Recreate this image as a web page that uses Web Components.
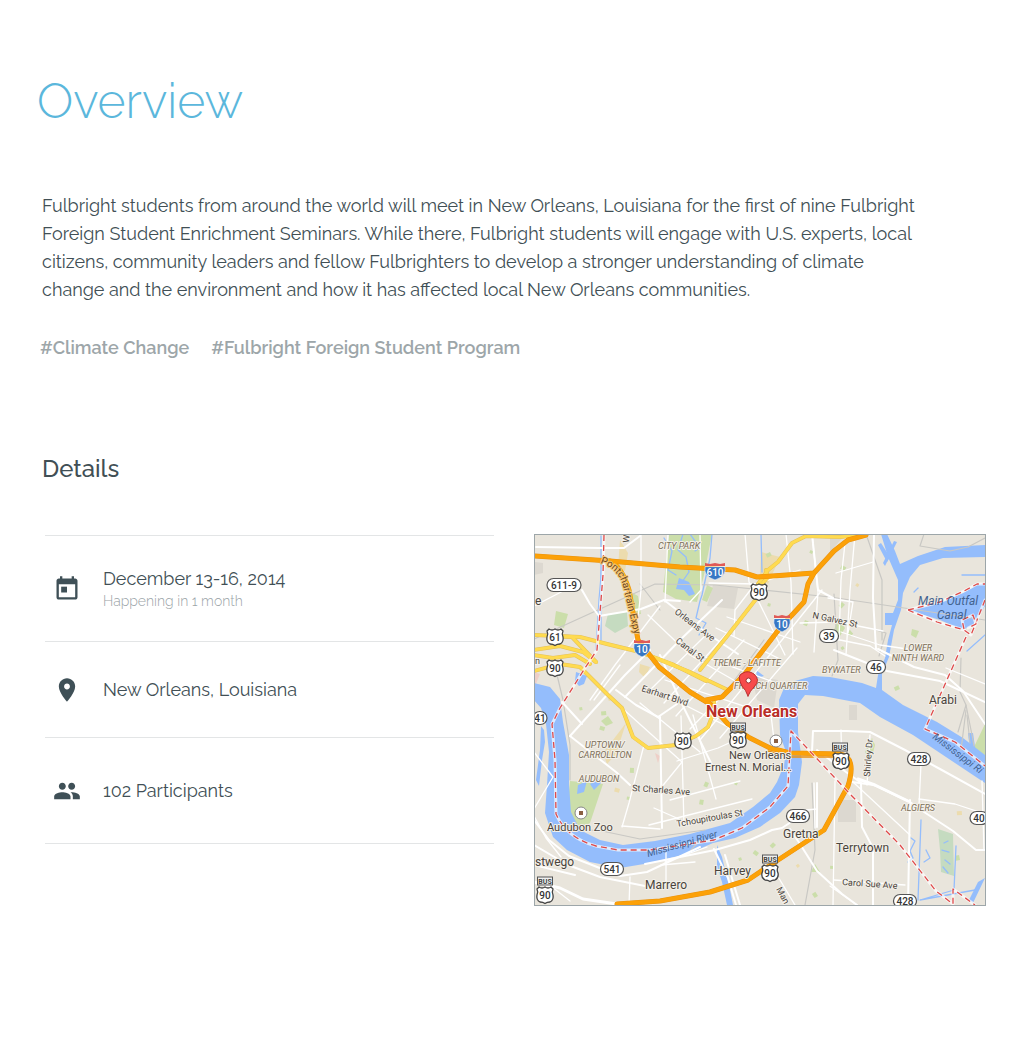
<!DOCTYPE html>
<html lang="en">
<head>
<meta charset="utf-8">
<meta name="viewport" content="width=device-width, initial-scale=1">
<title>Overview</title>
<style>
  body { margin: 0; background: #fff; color: #414f55; font-family: Raleway, Lato, "Open Sans", sans-serif; }
</style>
</head>
<body>
<event-page>
  <event-summary heading="Overview">
    Fulbright students from around the world will meet in New Orleans, Louisiana for the first of nine Fulbright Foreign Student Enrichment Seminars. While there, Fulbright students will engage with U.S. experts, local citizens, community leaders and fellow Fulbrighters to develop a stronger understanding of climate change and the environment and how it has affected local New Orleans communities.
    <hash-tag slot="tags" href="#climate-change">#Climate Change</hash-tag>
    <hash-tag slot="tags" href="#foreign-student-program">#Fulbright Foreign Student Program</hash-tag>
  </event-summary>
  <event-details heading="Details">
    <detail-row icon="calendar" class="tall">December 13-16, 2014<span slot="note">Happening in 1 month</span></detail-row>
    <detail-row icon="place">New Orleans, Louisiana</detail-row>
    <detail-row icon="people" class="tall">102 Participants</detail-row>
    <city-map slot="map"></city-map>
  </event-details>
</event-page>

<script>
class Base extends HTMLElement {
  constructor() {
    super();
    this.attachShadow({ mode: 'open' }).innerHTML = this.view();
  }
}

customElements.define('event-page', class extends Base {
  view() {
    return `<style>:host{display:block} main{display:flex;flex-direction:column;gap:92px;padding:72px 38px 80px 42px}</style>
    <main><slot></slot></main>`;
  }
});

customElements.define('event-summary', class extends Base {
  view() {
    return `<style>
      :host{display:block}
      h1{margin:0 0 62px -5px;font-size:48px;line-height:58px;font-weight:300;color:#5bb7dc}
      p{margin:0;max-width:880px;font-size:18px;line-height:28px;font-weight:400}
      nav{display:flex;flex-wrap:wrap;gap:22px;margin:30px 0 0 -2px}
    </style>
    <section><h1>${this.getAttribute('heading')}</h1><p><slot></slot></p><nav aria-label="Tags"><slot name="tags"></slot></nav></section>`;
  }
});

customElements.define('hash-tag', class extends Base {
  view() {
    return `<style>:host{display:block} a{color:#9da6a9;text-decoration:none;font-size:18px;line-height:28px;font-weight:600}</style>
    <a href="${this.getAttribute('href')}"><slot></slot></a>`;
  }
});

customElements.define('event-details', class extends Base {
  view() {
    return `<style>
      :host{display:block}
      h2{margin:0 0 50px;font-size:24px;line-height:30px;font-weight:500}
      .cols{display:grid;grid-template-columns:minmax(0,1fr) minmax(0,1fr);gap:40px;align-items:start}
      .list{display:flex;flex-direction:column;margin-left:3px;border-top:1px solid #e3e5e6;margin-top:1px}
    </style>
    <section><h2>${this.getAttribute('heading')}</h2>
    <div class="cols"><div class="list"><slot></slot></div><slot name="map"></slot></div></section>`;
  }
});

const ICONS = {
  calendar: '<path d="M16 1v2H8V1H6v2H5c-1.100 0-2 .9-2 2v14c0 1.100.9 2 2 2h14c1.100 0 2-.9 2-2V5c0-1.100-.9-2-2-2h-1V1zM5 8h14v11H5z" fill-rule="evenodd"/><path d="M7 10h5v5H7z"/>',
  place: '<path d="M12 2C8.130 2 5 5.130 5 9c0 5.250 7 13 7 13s7-7.750 7-13c0-3.870-3.130-7-7-7zm0 9.500c-1.380 0-2.500-1.120-2.500-2.500s1.120-2.500 2.500-2.500 2.500 1.120 2.500 2.500-1.120 2.500-2.500 2.500z"/>',
  people: '<path d="M16 11c1.660 0 2.990-1.340 2.990-3S17.660 5 16 5c-1.660 0-3 1.340-3 3s1.340 3 3 3zm-8 0c1.660 0 2.990-1.340 2.990-3S9.660 5 8 5C6.340 5 5 6.340 5 8s1.340 3 3 3zm0 2c-2.330 0-7 1.170-7 3.500V19h14v-2.500c0-2.330-4.670-3.500-7-3.500zm8 0c-.290 0-.620.020-.970.050 1.160.840 1.970 1.970 1.970 3.450V19h6v-2.500c0-2.330-4.670-3.500-7-3.500z"/>'
};
customElements.define('detail-row', class extends Base {
  view() {
    return `<style>
      :host{display:flex;align-items:center;gap:22px;box-sizing:border-box;height:96px;padding:0 8px;border-bottom:1px solid #e3e5e6}
      :host(.tall){height:106px}
      svg{width:28px;height:28px;flex:none;fill:#3f5057}
      .main{font-size:18px;line-height:24px}
      .note{display:block;font-size:14px;line-height:20px;font-weight:300;color:#9aa3a7}
    </style>
    <svg viewBox="0 0 24 24" aria-hidden="true">${ICONS[this.getAttribute('icon')]}</svg>
    <div><div class="main"><slot></slot></div><div class="note"><slot name="note"></slot></div></div>`;
  }
});

/* Map drawing */
const line = (cls, ...ds) => ds.map(d => `<path class="${cls}" d="M${d}"/>`).join('');
const label = (cls, x, y, text, turn = 0) =>
  `<text class="${cls}" x="${x}" y="${y}"${turn ? ` transform="rotate(${turn} ${x} ${y})"` : ''}>${text}</text>`;
const oval = (x, y, n, w = 19) =>
  `<rect x="${x - w / 2}" y="${y - 6.5}" width="${w}" height="13" rx="6.500" fill="#fff" stroke="#555" stroke-width="1.200"/><text class="num" x="${x}" y="${y + 3.500}">${n}</text>`;
const us = (x, y, n) =>
  `<path transform="translate(${x} ${y})" d="M-6-8Q-3-6 0-8Q3-6 6-8L8-6Q6.500-3 8 0Q9 5 5 7Q2 7 0 8.500Q-2 7-5 7Q-9 5-8 0Q-6.500-3-8-6Z" fill="#fff" stroke="#444" stroke-width="1.300"/><text class="num" x="${x}" y="${y + 3.500}">${n}</text>`;
const bus = (x, y) =>
  `<rect x="${x - 7.500}" y="${y - 4}" width="15" height="8" fill="#eee" stroke="#555"/><text class="bus" x="${x}" y="${y + 3}">BUS</text>`;
const inter = (x, y, n, w = 8) =>
  `<g transform="translate(${x} ${y})"><path d="M${-w}-4Q${-w - 2} 5 0 9Q${w + 2} 5 ${w}-4Z" fill="#3777c4" stroke="#fff" stroke-width=".6"/><path d="M${-w}-5V-8L${-w / 2}-7L0-8L${w / 2}-7L${w}-8V-5Z" fill="#e05a56"/></g><text class="num inv" x="${x}" y="${y + 4.500}">${n}</text>`;
const poi = (x, y) =>
  `<circle cx="${x}" cy="${y}" r="6" fill="#fff" stroke="#888"/><rect x="${x - 2}" y="${y - 2}" width="4" height="4" fill="#8b5f43"/>`;

const yellow = [
  '534 635L580 637L607 644L640 652L672 664L706 681', '534 650L560 646L583 652L596 662', '534 671L560 664L580 667L608 695L622 708L633 737L648 748L676 745L696 736L708 727L713 714L714 702',
  '700 670L728 635L760 594', '596 662L572 637L552 636', '640 652L690 672L728 690', '534 655L553 658L575 655L590 664',
  '758 584L768 570L778 562L792 543L806 536L840 537L866 534', '766 570L768 577L762 584'];
const orange = [
  '534 556L610 561L680 567L735 570L757 577L814 573L834 551L848 540L866 535', '814 573L808 584L804 602L780 628L744 675L722 697L706 700',
  '610 561Q622 567 629 590L638 640L659 667L690 692L710 704L728 724L750 738L770 748L790 753L840 754Q857 757 848 786L824 830L775 862L748 880L710 892L660 901L617 904'];

customElements.define('city-map', class extends Base {
  view() {
    return `<style>
      :host{display:block;box-sizing:border-box;border:1px solid #9da6a9}
      svg{display:block;width:100%;height:auto;font-family:Roboto,sans-serif}
      path{stroke-linejoin:round;stroke-linecap:round}
      path:not([fill]){fill:none}
      .g{fill:#cbdeaa} .lg{fill:#c5dbc0} .y{fill:#ecdcae} .gr{fill:#dcd8d0} .b{fill:#94bdfc} .pk{fill:#eecfc7}
      .w0{stroke:#fff;stroke-width:1.300} .w1{stroke:#fff;stroke-width:2} .w2{stroke:#fff;stroke-width:3}
      .rail{stroke:#c9c8c4;stroke-width:1.200}
      .yc{stroke:#e5c05a;stroke-width:4} .yf{stroke:#ffdb50;stroke-width:3}
      .oc{stroke:#e9920f;stroke-width:5} .of{stroke:#fca108;stroke-width:4}
      .bl{stroke:#94bdfc;stroke-width:1.300}
      .halo{stroke:#fff;stroke-width:3;opacity:.7} .red{stroke:#df4a4a;stroke-width:1.300;stroke-dasharray:6 4;stroke-linecap:butt}
      text{paint-order:stroke;stroke:#f3f0e9;stroke-width:2px;stroke-linejoin:round;fill:#4a443c}
      .town{font-size:12px} .road{font-size:9px} .area{font-size:9px;font-style:italic;fill:#7c6e57}
      .water{font-size:12px;font-style:italic;fill:#42628f;stroke:none} .river{font-size:10px;font-style:italic;fill:#42628f;stroke:none}
      .poi{font-size:11px} .expy{font-size:10px;fill:#69451d;stroke:#f7c877}
      .city{font-size:16px;font-weight:700;fill:#b92d27;stroke:#fff}
      .num{font-size:10px;font-weight:500;text-anchor:middle;stroke:none;fill:#333}
      .num.inv{fill:#fff} .bus{font-size:7px;font-weight:700;text-anchor:middle;stroke:none;fill:#444}
      .mid{text-anchor:middle}
    </style>
    <svg viewBox="535 535 450 370" role="img" aria-label="Map of New Orleans">
    <defs><clipPath id="frame"><rect x="535" y="535" width="450" height="370"/></clipPath></defs>
    <g clip-path="url(#frame)">
      <rect x="535" y="535" width="450" height="370" fill="#e9e5dc"/>
      <polygon class="gr" points="713,585 738,588 734,609 707,606"/><polygon class="gr" points="752,676 778,680 774,708 757,700"/>
      <rect class="gr" x="849" y="705" width="8" height="15"/><rect class="gr" x="838" y="800" width="18" height="22"/>
      <polygon class="gr" points="830,535 845,535 830,552"/><polygon class="gr" points="534,562 543,563 543,573 534,575"/>
      <polygon class="g" points="669,534 712,534 704,575 697,602 676,599 663,592"/>
      <polygon class="lg" points="608,614 627,612 628,626 615,633 605,626"/><polygon class="g" points="627,590 638,596 641,614 630,615"/>
      <polygon class="g" points="556,611 568,614 564,628 554,625"/><polygon class="g" points="570,781 603,784 590,823 574,832 567,812"/>
      <polygon class="y" points="761,552 780,557 768,584 760,577"/><polygon class="y" points="620,540 628,553 625,571 618,568"/>
      <polygon class="y" points="626,723 616,754 607,764 603,753"/><polygon class="y" points="640,664 650,667 645,678 639,672"/>
      <polygon class="g" points="985,724 985,757 974,747"/><polygon class="lg" points="938,829 953,834 954,876 941,872 940,850"/>
      <polygon class="g" points="707,585 713,588 707,602 702,600"/><polygon class="g" points="608,716 613,723 606,726 601,721"/>
      <polygon class="g" points="912,629 919,631 916,638 911,635"/><polygon class="g" points="872,738 875,745 870,764 865,752"/>
      <polygon class="g" points="838,619 845,628 840,636 834,630"/><polygon class="g" points="815,864 820,872 811,872"/>
      <polygon class="pk" points="534,672 540,674 535,686"/><polygon class="pk" points="655,753 660,756 658,763"/>
      ${[[768,603],[805,620],[842,565],[857,583],[842,602],[850,630],[843,646],[770,552],[611,695],[582,707],[606,711],[634,768],[630,797],[620,789],[709,783],[738,783],[759,853],[776,845],[800,866],[818,896],[900,689],[742,860],[960,860],[962,815],[833,869],[703,805],[604,731],[812,554]].map(([x, y], i) => `<rect class="${i % 5 === 3 ? 'y' : 'g'}" x="${x}" y="${y}" width="${3 + i % 3}" height="${3 + (i * 2) % 3}" transform="rotate(${15 + i * 7} ${x} ${y})"/>`).join('')}

      <polygon class="b" points="534,683 550,687 560,699 563,722 569,755 569,785 571,812 580,830 600,840 623,845 655,841 690,834 730,823 753,807 770,793 777,782 784,765 786,752 780,735 779,700 784,688 795,681 813,676 830,677 862,683 876,688 878,675 885,658 888,640 892,625 885,625 885,613 893,613 898,600 898,580 888,557 881,534 887,534 895,551 900,564 918,556 945,547 985,545 985,557 943,558 920,565 910,577 903,593 901,610 894,630 889,657 882,674 882,690 903,705 937,722 963,738 985,755 985,783 943,755 913,735 880,717 860,703 823,696 805,695 798,704 798,732 802,762 799,785 795,797 780,813 760,827 735,838 713,843 690,853 650,863 620,868 590,862 567,850 553,837 545,813 547,785 549,752 546,724 541,708 534,700"/>
      <polygon class="b" points="908,610 940,603 963,593 977,585 985,583 985,606 973,625 963,630 940,620"/>
      <polygon class="b" points="894,541 897,542 885,566 883,563"/><polygon class="b" points="890,557 887,562 878,545 881,543"/>
      <polygon class="b" points="576,672 587,676 584,684 579,686 575,681"/><polygon class="b" points="541,726 544,730 545,742 542,760 539,786 536,780 540,750"/>
      <polygon class="b" points="985,878 973,903 969,900 978,882"/><polygon class="b" points="973,733 968,733 970,750 976,754"/>
      <polygon class="b" points="578,785 587,781 584,792 577,794"/><polygon class="b" points="590,784 599,779 601,783 594,790"/>
      <polygon class="b" points="717,845 722,857 730,890 733,905 727,905 722,882 717,867"/><polygon class="b" points="679,578 689,582 695,594 689,596 684,590 676,589"/>
      <polygon class="b" points="756,670 764,676 757,678"/>
      ${line('bl', '683 534L678 550L686 557L689 572L682 582', '690 534L700 548L695 551', '712 534L710 558L702 595L700 601L696 618L706 623L699 635', '664 538L672 551L668 570L676 575', '914 592L918 588', '962 575L985 575', '761 534L762 572', '601 536L601 640', '602 565L599 600L596 650', '921 820L918 900', '956 846L954 890L920 900L975 890', '911 838L915 841L910 851L913 858L908 862', '926 850L930 858L924 862', '967 651L985 635', '944 843L948 841M942 850L949 852M945 860L950 864M943 867L948 873')}

      ${line('rail', '534 639L655 584L715 585L830 597L985 620', '640 584L660 610', '834 594L838 660L832 676', '866 534L882 580L882 640', '876 630L886 633L879 656', '553 658L563 700L570 745L570 780', '705 830L640 839L602 831L577 829', '691 850L700 840L712 842', '812 783L815 850L805 905', '961 658L960 692L966 705L958 732', '966 705L972 735L974 746', '966 710L961 750M967 715L970 743', '924 534L920 546L950 551L968 547L985 538', '764 640L720 700')}
      ${line('w0', '534 606L565 590', '641 534L641 590L638 618', '534 752L553 777L534 809', '668 534L665 602', '648 615L690 655L737 682', '660 606L615 665L590 700', '745 534L749 582L785 655', '700 534L701 590L690 602', '786 534L791 582L793 654', '812 534L818 592L814 652', '846 534L841 580L839 640', '755 584L735 610L734 636', '709 583L756 584L800 570', '800 623L838 622L883 631', '855 534L850 590L846 655', '836 573L873 562', '828 598L853 602L848 633', '830 638L870 646L885 656', '841 632L880 645L914 650', '700 740L782 640L822 590', '720 738L797 648', '690 729L760 657', '676 716L744 640', '664 703L728 632', '650 690L708 633', '655 690L774 750', '665 680L780 718', '692 652L790 688', '716 628L780 659', '727 617L800 642', '622 708L682 762L660 789', '640 703L700 752', '644 745L629 803L622 827', '681 716L684 825', '693 715L716 799', '620 665L594 700', '677 761L718 748L738 739', '670 800L740 781', '649 825L752 799', '654 808L688 823', '622 826L660 829', '534 816L546 838L561 857', '630 877L629 905', '534 883L552 887L570 901', '666 852L666 885', '661 865L695 862', '768 860L795 905', '771 715L775 748', '814 783L815 828', '841 730L842 770', '870 735L867 785', '853 782L910 835', '835 781L833 905', '921 764L919 805', '982 781L984 850', '919 799L955 804L985 814', '834 880L905 885', '830 886L857 905', '946 668L985 684', '665 862L707 847', '806 810L817 809')}
      ${line('w1', '536 547L600 548L624 548L640 536', '664 600L708 634L738 654', '582 590L590 604L599 616L641 609L664 600L680 601', '625 697L680 640L722 600', '570 736L625 675L650 650', '562 702L582 724', '570 736L616 772L630 785', '616 690L636 705L658 717L677 704', '660 717L662 828', '660 655L680 700L714 769', '812 534L818 590L833 598', '874 534L873 598L876 649', '878 649L914 667L945 675L963 691L985 724', '834 650L887 671L940 681L985 702', '846 731L870 732L905 750L940 769L985 794', '812 752L813 731L846 731', '852 782L874 785L910 802L921 810L953 831L976 850L985 850', '910 800L908 905', '861 783L862 827L873 848L873 905', '534 820L549 840L569 856L592 865L620 876L647 872L700 847', '534 845L568 865L600 877L645 886', '534 865L575 875', '645 864L715 850L750 840L772 830L782 828L806 812', '817 750L846 772L860 782', '817 783V827', '790 829L800 844L817 871L842 894L857 905', '714 849L728 878L736 905', '725 855L740 905')}
      ${line('w2', '534 882L560 888L583 899L617 904', '858 779L875 785L908 801')}
      ${line('yc', ...yellow)}${line('yf', ...yellow)}${line('oc', ...orange)}${line('of', ...orange)}
      <path class="w0" d="M768 751L790 757H842" style="stroke:#e99010"/>
      ${['604 535L603 575L597 650L585 668L560 708L552 724L555 760L556 814Q567 838 596 846L618 850L650 850L714 840L742 828L770 807L788 786L791 731L850 794L900 845L936 891L953 904L953 889L975 905', '908 610L937 622L964 630L971 635L985 600M908 610L940 602L964 591L977 584L985 584', '966 637L938 700L925 729L955 742L985 766', '964 629L962 620L973 615L976 624L968 628'].map(d => line('halo', d) + line('red', d)).join('')}

      ${label('area', 658, 549, 'CITY PARK')}
      ${label('road', 629, 543, 'W', -85)}
      <path id="expy-curve" d="M600 563Q620 569 624 590L638 650"/><text class="expy"><textPath href="#expy-curve">Pontchartrain Expy</textPath></text>
      ${label('road', 674, 613, 'Orleans Ave', 37)}${label('road', 675, 642, 'Canal St', 37)}
      ${label('road', 812, 618, 'N Galvez St', 12)}${label('road', 641, 691, 'Earhart Blvd', 18)}
      ${label('area', 713, 666, 'TREME - LAFITTE')}${label('area', 734, 689, 'FRENCH QUARTER')}
      ${label('area', 822, 673, 'BYWATER')}
      ${label('area mid', 918, 651, 'LOWER')}${label('area mid', 918, 661, 'NINTH WARD')}
      ${label('water', 918, 605, 'Main Outfal')}${label('water', 937, 619, 'Canal')}
      ${label('town', 929, 704, 'Arabi')}
      ${label('river', 932, 738, 'Mississippi Ri', 37)}${label('river', 648, 857, 'Mississippi River', -16)}
      ${label('area mid', 605, 748, 'UPTOWN/')}${label('area mid', 605, 758, 'CARROLLTON')}${label('area mid', 599, 782, 'AUDUBON')}
      ${label('road', 632, 791, 'St Charles Ave', 4)}${label('road', 677, 827, 'Tchoupitoulas St', -10)}
      ${label('road', 870, 777, 'Shirley Dr', -86)}${label('road', 842, 885, 'Carol Sue Ave', 4)}${label('road', 776, 889, 'Man', 62)}
      ${label('area', 901, 811, 'ALGIERS')}
      ${label('poi', 729, 759, 'New Orleans')}${label('poi', 705, 771, 'Ernest N. Morial...')}${label('poi', 547, 831, 'Audubon Zoo')}
      ${label('town', 535, 866, 'stwego')}${label('town', 645, 889, 'Marrero')}${label('town', 714, 875, 'Harvey')}
      ${label('town', 783, 838, 'Gretna')}${label('town', 836, 852, 'Terrytown')}${label('town', 535, 605, 'e')}${label('road', 535, 664, 'n')}
      ${inter(715, 571, 610, 10)}${inter(782, 623, 10)}${inter(642, 648, 10)}
      ${oval(564, 585, '611-9', 34)}${oval(829, 636, 39)}${oval(876, 667, 46)}${oval(919, 759, 428, 23)}${oval(798, 816, 466, 23)}${oval(612, 869, 541, 23)}${oval(905, 901, 428, 23)}${oval(979, 818, 40, 18)}${oval(540, 718, 41, 14)}
      ${us(759, 592, 90)}${us(555, 637, 61)}${us(555, 668, 90)}${us(683, 741, 90)}${us(738, 740, 90)}${us(841, 761, 90)}${us(770, 873, 90)}${us(545, 895, 90)}
      ${bus(738, 727)}${bus(840, 747)}${bus(770, 859)}${bus(545, 881)}
      ${poi(776, 741)}${poi(581, 813)}
      ${label('city', 706, 717, 'New Orleans')}
      <path d="M748 696Q746 690 742 686Q736 675 743 673Q748 670 754 674Q761 680 754 687Q750 691 748 696Z" fill="#f74b4c" stroke="#b92d2d"/><circle cx="748.500" cy="680.500" r="2.500" fill="#fff" stroke="#9d3030"/>
    </g></svg>`;
  }
});
</script>
</body>
</html>
